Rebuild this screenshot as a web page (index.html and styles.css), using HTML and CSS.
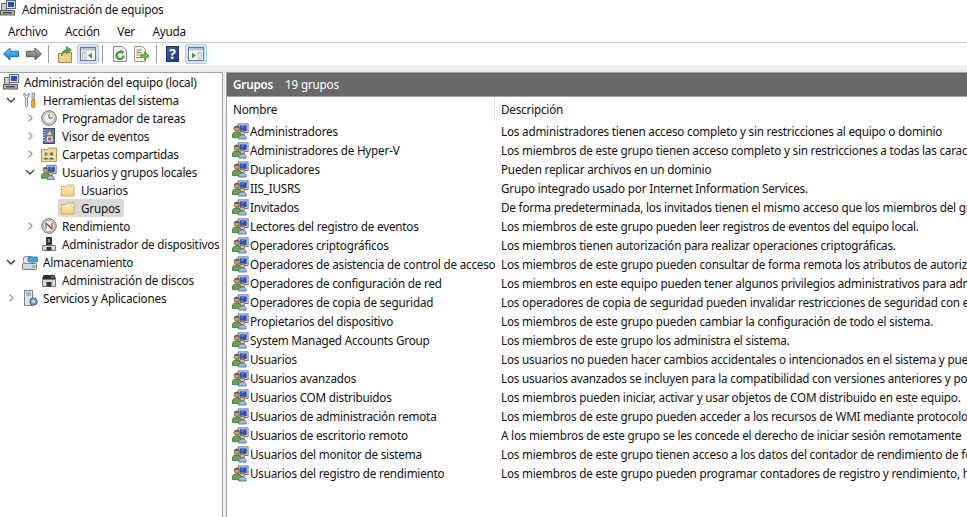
FILE: index.html
```html
<!DOCTYPE html>
<html lang="es">
<head>
  <meta charset="UTF-8">
  <title>Administración de equipos</title>
  <link rel="stylesheet" href="styles.css">
</head>
<body>
  <svg class="sprites" width="0" height="0">
    <defs>
      <linearGradient id="g-blue" x1="0" y1="0" x2="0" y2="1">
        <stop offset="0" stop-color="#8fd4fa"/>
        <stop offset="0.5" stop-color="#35a5ee"/>
        <stop offset="1" stop-color="#1b78c8"/>
      </linearGradient>
      <linearGradient id="g-gray" x1="0" y1="0" x2="0" y2="1">
        <stop offset="0" stop-color="#b4b4b4"/>
        <stop offset="0.5" stop-color="#8a8a8a"/>
        <stop offset="1" stop-color="#6c6c6c"/>
      </linearGradient>
      <linearGradient id="g-help" x1="0" y1="0" x2="1" y2="1">
        <stop offset="0" stop-color="#3d5cc0"/>
        <stop offset="1" stop-color="#1f3488"/>
      </linearGradient>
      <linearGradient id="g-folder" x1="0" y1="0" x2="0" y2="1">
        <stop offset="0" stop-color="#fdeeb8"/>
        <stop offset="1" stop-color="#f5d27a"/>
      </linearGradient>
      <symbol id="i-computer" viewBox="0 0 16 16">
        <rect x="6.500" y="0.500" width="9" height="8" fill="#e6ebf2" stroke="#5a6a80"/>
        <rect x="8" y="2" width="6" height="5" fill="#1f4fd0"/>
        <rect x="1.500" y="3.500" width="5" height="7" fill="#c9ccc9" stroke="#6a6a6a"/>
        <rect x="0.500" y="10.500" width="14" height="4.500" fill="#b4b8b4" stroke="#5c5c5c"/>
        <rect x="3" y="12" width="9" height="1.500" fill="#4a4a4a"/>
      </symbol>
      <symbol id="i-group" viewBox="0 0 18 18">
        <rect x="6.500" y="1.500" width="10.500" height="9" fill="#dfe6ef" stroke="#5d6c82"/>
        <rect x="8" y="3" width="7.500" height="6" fill="#1c50cf"/>
        <path d="M10 3h4l-4 4z" fill="#5b86e6"/>
        <circle cx="5" cy="6.500" r="2.800" fill="#c99f72" stroke="#6f5234" stroke-width="0.800"/>
        <path d="M2.300 5.500c1-2.500 4.500-2.500 5.400 0z" fill="#6f5234"/>
        <path d="M0.500 16v-3c0-2 2-3 4.500-3s4.500 1 4.500 3v3z" fill="#63a74b" stroke="#3d6d30" stroke-width="0.900"/>
        <circle cx="11" cy="10.500" r="2.700" fill="#dcbb94" stroke="#6f5234" stroke-width="0.800"/>
        <path d="M8.300 9.800c.8-2.200 4.600-2.200 5.400 0z" fill="#8a6a44"/>
        <path d="M7 17.500v-1.500c0-1.800 1.800-2.800 4-2.800s4 1 4 2.800v1.500z" fill="#9dbce0" stroke="#4a6c92" stroke-width="0.900"/>
      </symbol>
      <symbol id="i-folder" viewBox="0 0 16 16">
        <path d="M1.500 4.500h5l1-1.500h6.500v11h-13z" fill="url(#g-folder)" stroke="#cfae5e"/>
        <rect x="8.500" y="3.500" width="5" height="1.500" fill="#fff8dc"/>
        <rect x="9.500" y="3.700" width="3" height="0.800" fill="#7fa8d8"/>
      </symbol>
      <symbol id="i-chevron-right" viewBox="0 0 10 10">
        <path d="M3.500 1.500l3.500 3.500-3.500 3.500" fill="none" stroke="#a0a0a0" stroke-width="1.400"/>
      </symbol>
      <symbol id="i-chevron-down" viewBox="0 0 10 10">
        <path d="M1 3l4 4 4-4" fill="none" stroke="#404040" stroke-width="1.400"/>
      </symbol>
    </defs>
  </svg>

  <header class="title-bar">
    <svg class="title-icon" width="16" height="16"><use href="#i-computer"/></svg>
    <span>Administración de equipos</span>
  </header>

  <nav class="menu-bar">
    <span>Archivo</span>
    <span>Acción</span>
    <span>Ver</span>
    <span>Ayuda</span>
  </nav>

  <div class="toolbar">
    <div class="tool-group nav-tools">
      <svg width="16" height="14" viewBox="0 0 16 14">
        <path d="M0.500 7l6.500-6v3.300h8.500v5.400h-8.500v3.300z" fill="url(#g-blue)" stroke="#1c6fb8"/>
      </svg>
      <svg width="16" height="14" viewBox="0 0 16 14">
        <path d="M15.500 7l-6.500-6v3.300h-8.500v5.400h8.500v3.300z" fill="url(#g-gray)" stroke="#5e5e5e"/>
      </svg>
    </div>
    <i class="tool-sep"></i>
    <div class="tool-group pane-tools">
      <svg width="14" height="17" viewBox="0 0 14 17">
        <path d="M0.500 7.500h4l1-1h8v10h-13z" fill="#eccf8a" stroke="#a58a44"/>
        <path d="M3.500 10c0-3.500 2-6 5-6.500v-3l5 3.500-5 3.500v-2c-2 .3-4 1.500-5 4.500z" fill="#4fae3c" stroke="#2f7d25" stroke-width="0.600"/>
      </svg>
      <span class="tool-on">
        <svg width="16" height="14" viewBox="0 0 16 14">
          <rect x="0.500" y="0.500" width="15" height="13" fill="#fff" stroke="#777"/>
          <rect x="1" y="1" width="14" height="2.500" fill="#b9c4d0"/>
          <rect x="2.500" y="5" width="3.500" height="7" fill="#dce9f6" stroke="#7b9bc0" stroke-width="0.600"/>
          <path d="M12 5.500v6l-4-3z" fill="#3f9b35"/>
        </svg>
      </span>
    </div>
    <i class="tool-sep"></i>
    <div class="tool-group page-tools">
      <svg width="14" height="16" viewBox="0 0 14 16">
        <path d="M0.500 0.500h9l4 4v11h-13z" fill="#f4f4f4" stroke="#8c8c8c"/>
        <path d="M10.500 9.500a3.500 3.500 0 1 1-1.800-3.100" fill="none" stroke="#3a9d32" stroke-width="2.200"/>
        <path d="M7 3.500l4 2-2 3.200z" fill="#3a9d32"/>
      </svg>
      <svg width="16" height="16" viewBox="0 0 16 16">
        <path d="M0.500 0.500h8l3 3v12h-11z" fill="#f7f3dc" stroke="#9a9a8a"/>
        <path d="M2.500 4h5M2.500 6.500h5M2.500 9h3M2.500 11.500h3" stroke="#777" stroke-width="1"/>
        <path d="M6.500 8.500h4v-2.500l5 4-5 4v-2.500h-4z" fill="#6fc04a" stroke="#3c8a2a" stroke-width="0.700"/>
      </svg>
    </div>
    <i class="tool-sep"></i>
    <div class="tool-group help-tools">
      <svg width="13" height="16" viewBox="0 0 13 16">
        <rect x="0.500" y="0.500" width="12" height="15" fill="url(#g-help)" stroke="#1e2f78"/>
        <text x="6.500" y="13" class="help-mark">?</text>
      </svg>
      <span class="tool-on">
        <svg width="16" height="14" viewBox="0 0 16 14">
          <rect x="0.500" y="0.500" width="15" height="13" fill="#fff" stroke="#777"/>
          <rect x="1" y="1" width="14" height="2.500" fill="#b9c4d0"/>
          <rect x="10" y="5" width="3.500" height="7" fill="#dce9f6" stroke="#7b9bc0" stroke-width="0.600"/>
          <path d="M4 5.500v6l4-3z" fill="#3f9b35"/>
        </svg>
      </span>
    </div>
  </div>

  <main class="workspace">
    <aside class="tree">
      <div class="node root">
        <svg width="16" height="16"><use href="#i-computer"/></svg>
        <span class="label">Administración del equipo (local)</span>
      </div>
      <div class="node">
        <svg class="twist" width="10" height="10"><use href="#i-chevron-down"/></svg>
        <svg class="ico" width="16" height="16" viewBox="0 0 16 16">
          <path d="M2 1v3l1.500 1.500v8.500c0 1.500 2 1.500 2 0v-8.500l1.500-1.500v-3l-1 2h-3z" fill="#ececec" stroke="#7a7a7a" stroke-width="0.800"/>
          <rect x="10" y="1" width="2.500" height="7" fill="#d0d0d0" stroke="#7a7a7a" stroke-width="0.700"/>
          <rect x="9.500" y="8" width="3.500" height="7.500" rx="1" fill="#eba91a" stroke="#9a6d10" stroke-width="0.600"/>
        </svg>
        <span class="label">Herramientas del sistema</span>
      </div>
      <div class="node lvl-2">
        <svg class="twist" width="10" height="10"><use href="#i-chevron-right"/></svg>
        <svg class="ico" width="16" height="16" viewBox="0 0 16 16">
          <circle cx="8" cy="8" r="7.300" fill="#cfd3d8" stroke="#77736a"/>
          <circle cx="8" cy="8" r="5.300" fill="#f7f0dc" stroke="#a09c90" stroke-width="0.600"/>
          <path d="M8 4v4h3.500" fill="none" stroke="#555" stroke-width="1"/>
        </svg>
        <span class="label">Programador de tareas</span>
      </div>
      <div class="node lvl-2">
        <svg class="twist" width="10" height="10"><use href="#i-chevron-right"/></svg>
        <svg class="ico" width="16" height="16" viewBox="0 0 16 16">
          <rect x="2.500" y="0.500" width="11" height="15" fill="#5f7fae" stroke="#33456a"/>
          <path d="M2 2h1.500M2 4.500h1.500M2 7h1.500M2 9.500h1.500M2 12h1.500" stroke="#e8e8e8" stroke-width="1"/>
          <path d="M8.500 2.500l2.500 4.500h-5z" fill="#f5d33c"/>
          <rect x="6" y="8.500" width="5.500" height="5" fill="#f1e6e0"/>
          <circle cx="8.700" cy="11" r="1.800" fill="#c8443a"/>
        </svg>
        <span class="label">Visor de eventos</span>
      </div>
      <div class="node lvl-2">
        <svg class="twist" width="10" height="10"><use href="#i-chevron-right"/></svg>
        <svg class="ico" width="16" height="16" viewBox="0 0 16 16">
          <path d="M0.500 3.500h6l1-1.500h8v13.500h-15z" fill="#f3dc98" stroke="#b79a4e"/>
          <circle cx="5" cy="8" r="1.800" fill="#6b8fb5"/>
          <path d="M2.500 13.500c0-2.500 5-2.500 5 0z" fill="#4f8a3a"/>
          <circle cx="10.500" cy="8" r="1.800" fill="#8a6a44"/>
          <path d="M8 13.500c0-2.500 5-2.500 5 0z" fill="#3f6a9a"/>
        </svg>
        <span class="label">Carpetas compartidas</span>
      </div>
      <div class="node lvl-2">
        <svg class="twist" width="10" height="10"><use href="#i-chevron-down"/></svg>
        <svg class="ico" width="16" height="16" viewBox="0 0 18 18"><use href="#i-group"/></svg>
        <span class="label">Usuarios y grupos locales</span>
      </div>
      <div class="node lvl-3">
        <svg width="16" height="16"><use href="#i-folder"/></svg>
        <span class="label">Usuarios</span>
      </div>
      <div class="node lvl-3 selected">
        <svg width="16" height="16"><use href="#i-folder"/></svg>
        <span class="label">Grupos</span>
      </div>
      <div class="node lvl-2">
        <svg class="twist" width="10" height="10"><use href="#i-chevron-right"/></svg>
        <svg class="ico" width="16" height="16" viewBox="0 0 16 16">
          <circle cx="8" cy="8" r="7.300" fill="#d6d2c6" stroke="#6f6b62"/>
          <circle cx="8" cy="8" r="5.300" fill="#fff" stroke="#888" stroke-width="0.600"/>
          <path d="M5 11v-6M11 11v-6" stroke="#333" stroke-width="1"/>
          <path d="M5 5l6 6" stroke="#c8352b" stroke-width="1.600"/>
        </svg>
        <span class="label">Rendimiento</span>
      </div>
      <div class="node lvl-2">
        <span class="twist"></span>
        <svg class="ico" width="16" height="16" viewBox="0 0 16 16">
          <rect x="5" y="1" width="6" height="8" fill="#3a3a3a"/>
          <rect x="7" y="3" width="2" height="3" fill="#4fc04a"/>
          <path d="M1.500 9.500h13v5h-13z" fill="#d6d6d6" stroke="#777"/>
          <rect x="5.500" y="11" width="5" height="3.500" fill="#333"/>
        </svg>
        <span class="label">Administrador de dispositivos</span>
      </div>
      <div class="node">
        <svg class="twist" width="10" height="10"><use href="#i-chevron-down"/></svg>
        <svg class="ico" width="16" height="16" viewBox="0 0 16 16">
          <rect x="0.500" y="9.500" width="14" height="6" rx="1" fill="#d8d8d8" stroke="#777"/>
          <rect x="1.500" y="2.500" width="9" height="7" rx="2" fill="#e4e8ec" stroke="#7f8a96"/>
          <rect x="6" y="3" width="9.500" height="5" rx="1" fill="#3fa6de" stroke="#256f9e" stroke-width="0.700"/>
          <rect x="10.500" y="11.500" width="2.500" height="2" fill="#5fb04a"/>
        </svg>
        <span class="label">Almacenamiento</span>
      </div>
      <div class="node lvl-2">
        <span class="twist"></span>
        <svg class="ico" width="16" height="16" viewBox="0 0 16 16">
          <path d="M2.500 3h11l1.500 4h-14z" fill="#2e2e2e"/>
          <path d="M1.500 7.500h13v7h-13z" fill="#d6d6d6" stroke="#777"/>
          <rect x="5.500" y="10" width="5" height="4.500" fill="#333"/>
          <rect x="10" y="4.500" width="3" height="1" fill="#8ad050"/>
        </svg>
        <span class="label">Administración de discos</span>
      </div>
      <div class="node">
        <svg class="twist" width="10" height="10"><use href="#i-chevron-right"/></svg>
        <svg class="ico" width="16" height="16" viewBox="0 0 16 16">
          <rect x="2.500" y="0.500" width="8" height="15" fill="#dfe3e8" stroke="#7d8794"/>
          <path d="M4 3h5M4 5h5" stroke="#7d8794"/>
          <circle cx="11.500" cy="11.500" r="3.700" fill="#6fa0d2" stroke="#3b6a9c"/>
          <circle cx="11.500" cy="11.500" r="1.200" fill="#fff"/>
        </svg>
        <span class="label">Servicios y Aplicaciones</span>
      </div>
    </aside>

    <section class="details">
      <div class="details-head"><b>Grupos</b><span>19 grupos</span></div>
      <div class="list-frame">
        <div class="list-columns">
          <div class="col-name">Nombre</div>
          <div class="col-desc">Descripción</div>
        </div>
        <div class="row"><div class="col-name"><svg width="17" height="18"><use href="#i-group"/></svg>Administradores</div><div class="col-desc">Los administradores tienen acceso completo y sin restricciones al equipo o dominio</div></div>
        <div class="row"><div class="col-name"><svg width="17" height="18"><use href="#i-group"/></svg>Administradores de Hyper-V</div><div class="col-desc">Los miembros de este grupo tienen acceso completo y sin restricciones a todas las características de Hyper-V.</div></div>
        <div class="row"><div class="col-name"><svg width="17" height="18"><use href="#i-group"/></svg>Duplicadores</div><div class="col-desc">Pueden replicar archivos en un dominio</div></div>
        <div class="row"><div class="col-name"><svg width="17" height="18"><use href="#i-group"/></svg>IIS_IUSRS</div><div class="col-desc">Grupo integrado usado por Internet Information Services.</div></div>
        <div class="row"><div class="col-name"><svg width="17" height="18"><use href="#i-group"/></svg>Invitados</div><div class="col-desc">De forma predeterminada, los invitados tienen el mismo acceso que los miembros del grupo Usuarios</div></div>
        <div class="row"><div class="col-name"><svg width="17" height="18"><use href="#i-group"/></svg>Lectores del registro de eventos</div><div class="col-desc">Los miembros de este grupo pueden leer registros de eventos del equipo local.</div></div>
        <div class="row"><div class="col-name"><svg width="17" height="18"><use href="#i-group"/></svg>Operadores criptográficos</div><div class="col-desc">Los miembros tienen autorización para realizar operaciones criptográficas.</div></div>
        <div class="row"><div class="col-name"><svg width="17" height="18"><use href="#i-group"/></svg>Operadores de asistencia de control de acceso</div><div class="col-desc">Los miembros de este grupo pueden consultar de forma remota los atributos de autorización</div></div>
        <div class="row"><div class="col-name"><svg width="17" height="18"><use href="#i-group"/></svg>Operadores de configuración de red</div><div class="col-desc">Los miembros en este equipo pueden tener algunos privilegios administrativos para administrar</div></div>
        <div class="row"><div class="col-name"><svg width="17" height="18"><use href="#i-group"/></svg>Operadores de copia de seguridad</div><div class="col-desc">Los operadores de copia de seguridad pueden invalidar restricciones de seguridad con el fin de</div></div>
        <div class="row"><div class="col-name"><svg width="17" height="18"><use href="#i-group"/></svg>Propietarios del dispositivo</div><div class="col-desc">Los miembros de este grupo pueden cambiar la configuración de todo el sistema.</div></div>
        <div class="row"><div class="col-name"><svg width="17" height="18"><use href="#i-group"/></svg>System Managed Accounts Group</div><div class="col-desc">Los miembros de este grupo los administra el sistema.</div></div>
        <div class="row"><div class="col-name"><svg width="17" height="18"><use href="#i-group"/></svg>Usuarios</div><div class="col-desc">Los usuarios no pueden hacer cambios accidentales o intencionados en el sistema y pueden</div></div>
        <div class="row"><div class="col-name"><svg width="17" height="18"><use href="#i-group"/></svg>Usuarios avanzados</div><div class="col-desc">Los usuarios avanzados se incluyen para la compatibilidad con versiones anteriores y poseen</div></div>
        <div class="row"><div class="col-name"><svg width="17" height="18"><use href="#i-group"/></svg>Usuarios COM distribuidos</div><div class="col-desc">Los miembros pueden iniciar, activar y usar objetos de COM distribuido en este equipo.</div></div>
        <div class="row"><div class="col-name"><svg width="17" height="18"><use href="#i-group"/></svg>Usuarios de administración remota</div><div class="col-desc">Los miembros de este grupo pueden acceder a los recursos de WMI mediante protocolos de</div></div>
        <div class="row"><div class="col-name"><svg width="17" height="18"><use href="#i-group"/></svg>Usuarios de escritorio remoto</div><div class="col-desc">A los miembros de este grupo se les concede el derecho de iniciar sesión remotamente</div></div>
        <div class="row"><div class="col-name"><svg width="17" height="18"><use href="#i-group"/></svg>Usuarios del monitor de sistema</div><div class="col-desc">Los miembros de este grupo tienen acceso a los datos del contador de rendimiento de forma</div></div>
        <div class="row"><div class="col-name"><svg width="17" height="18"><use href="#i-group"/></svg>Usuarios del registro de rendimiento</div><div class="col-desc">Los miembros de este grupo pueden programar contadores de registro y rendimiento, habilitar</div></div>
      </div>
    </section>
  </main>
</body>
</html>
```

FILE: styles.css
```css
html, body {
  height: 100%;
}

body {
  margin: 0;
  background-color: #ffffff;
  color: #111111;
  font-family: "Noto Sans", "Open Sans", sans-serif;
  font-size: 11.7px;
  letter-spacing: -0.2px;
  display: flex;
  flex-direction: column;
  overflow: hidden;
}

.sprites {
  position: absolute;
}

.title-bar {
  height: 18px;
  padding-bottom: 2px;
  display: flex;
  align-items: center;
  gap: 6px;
  flex: none;
}

.title-icon {
  margin-top: -2px;
}

.menu-bar {
  height: 22px;
  display: flex;
  align-items: center;
  gap: 17.5px;
  padding-left: 8px;
  border-bottom: 1px solid #c8c8c8;
  flex: none;
}

.toolbar {
  height: 22px;
  display: flex;
  align-items: center;
  flex: none;
}

.tool-group {
  display: flex;
  align-items: center;
}

.nav-tools {
  gap: 7px;
  padding: 0 6px 0 3px;
}

.pane-tools {
  gap: 5px;
  padding: 0 3px 0 9px;
}

.page-tools {
  gap: 7px;
  padding: 0 6px 0 10px;
}

.help-tools {
  gap: 6px;
  padding-left: 9px;
}

.tool-sep {
  width: 1px;
  height: 18px;
  background-color: #a0a0a0;
}

.tool-on {
  width: 22px;
  height: 20px;
  display: flex;
  align-items: center;
  justify-content: center;
  background-color: #cce4f7;
  border: 1px solid #a8d2f5;
  border-radius: 3px;
  box-sizing: border-box;
}

.help-mark {
  fill: #ffffff;
  font-size: 14px;
  font-weight: 700;
  text-anchor: middle;
}

.workspace {
  flex: 1;
  min-height: 0;
  display: flex;
  gap: 3px;
  background-color: #f0f0f0;
  padding-top: 7px;
}

.tree {
  width: 222px;
  flex: none;
  background-color: #ffffff;
  border-top: 1px solid #a0a0a0;
  border-right: 1px solid #a0a0a0;
}

.node {
  height: 18px;
  display: flex;
  align-items: center;
  white-space: nowrap;
  padding-left: 6px;
}

.node svg {
  flex: none;
}

.twist {
  width: 10px;
  height: 10px;
  flex: none;
}

.ico {
  margin-left: 6px;
}

.label {
  margin-left: 5px;
}

.root {
  padding-left: 3px;
}

.lvl-2 {
  padding-left: 25px;
}

.lvl-3 {
  padding-left: 60px;
}

.lvl-3.selected {
  width: fit-content;
  padding: 0 4px 0 2px;
  margin-left: 58px;
  background-color: #d9d9d9;
  border-radius: 2px;
}

.details {
  flex: 1;
  min-width: 0;
  display: flex;
  flex-direction: column;
  border-left: 1px solid #a0a0a0;
  background-color: #ffffff;
}

.details-head {
  height: 22px;
  padding: 0 0 1px 6px;
  display: flex;
  align-items: center;
  gap: 12px;
  background-color: #696969;
  color: #ffffff;
  border-top: 1px solid #a0a0a0;
  border-bottom: 1px solid #a0a0a0;
  flex: none;
}

.details-head b {
  font-weight: 600;
}

.list-frame {
  flex: 1;
  overflow: hidden;
  white-space: nowrap;
  padding-left: 1px;
}

.list-columns {
  height: 24px;
  display: flex;
  align-items: center;
}

.list-columns .col-name {
  padding-left: 5px;
  height: 24px;
  line-height: 24px;
  border-right: 1px solid #e5e5e5;
}

.col-name {
  width: 267px;
  flex: none;
  box-sizing: border-box;
  overflow: hidden;
}

.col-desc {
  padding-left: 6px;
}

.row {
  height: 19px;
  display: flex;
  align-items: center;
}

.row .col-name {
  display: flex;
  align-items: center;
  gap: 1px;
  padding-left: 4px;
}

.row svg {
  flex: none;
}
```
